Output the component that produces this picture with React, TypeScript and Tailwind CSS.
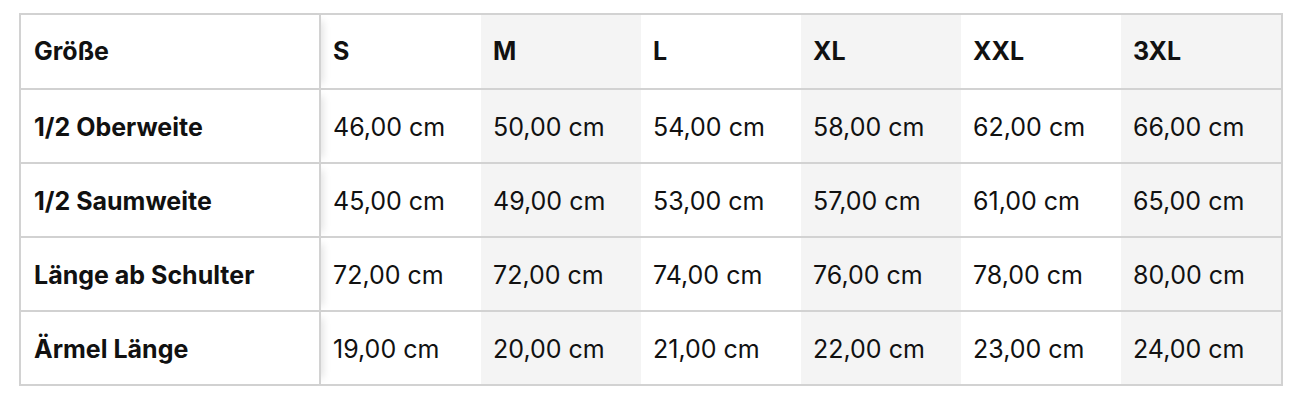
import React from 'react'

const sizes = ['S', 'M', 'L', 'XL', 'XXL', '3XL']

const rows: { label: string; values: string[] }[] = [
  { label: '1/2 Oberweite', values: ['46,00 cm', '50,00 cm', '54,00 cm', '58,00 cm', '62,00 cm', '66,00 cm'] },
  { label: '1/2 Saumweite', values: ['45,00 cm', '49,00 cm', '53,00 cm', '57,00 cm', '61,00 cm', '65,00 cm'] },
  { label: 'Länge ab Schulter', values: ['72,00 cm', '72,00 cm', '74,00 cm', '76,00 cm', '78,00 cm', '80,00 cm'] },
  { label: 'Ärmel Länge', values: ['19,00 cm', '20,00 cm', '21,00 cm', '22,00 cm', '23,00 cm', '24,00 cm'] },
]

function SizeTable() {
  return (
    <div className="ml-[19px] mt-[13px] w-[1264px] border-2 border-[#d2d2d2] bg-white">
      <table className="table-fixed border-separate border-spacing-0 w-[1260px] text-[#111]">
        <colgroup>
          <col className="w-[300px]" />
          {sizes.map((s) => (
            <col key={s} className="w-[160px]" />
          ))}
        </colgroup>
        <thead>
          <tr className="h-[75px]">
            <th className="relative z-10 border-r-2 border-b-2 border-[#d2d2d2] bg-white pl-[13px] pt-px text-left font-bold shadow-[8px_0_8px_-6px_rgba(0,0,0,0.12)]">
              Größe
            </th>
            {sizes.map((s, i) => (
              <th
                key={s}
                className={`border-b-2 border-[#d2d2d2] pl-3 pt-px text-left font-bold ${i % 2 === 1 ? 'bg-[#f4f4f4]' : 'bg-white'}`}
              >
                {s}
              </th>
            ))}
          </tr>
        </thead>
        <tbody>
          {rows.map((row, r) => {
            const last = r === rows.length - 1
            return (
              <tr key={row.label} className={last ? 'h-[72px]' : 'h-[74px]'}>
                <td
                  className={`relative z-10 border-r-2 border-[#d2d2d2] bg-white pl-[13px] pt-1 font-bold shadow-[8px_0_8px_-6px_rgba(0,0,0,0.12)] ${last ? '' : 'border-b-2'}`}
                >
                  {row.label}
                </td>
                {row.values.map((v, i) => (
                  <td
                    key={i}
                    className={`border-[#d2d2d2] pl-3 pt-1 ${last ? '' : 'border-b-2'} ${i % 2 === 1 ? 'bg-[#f4f4f4]' : 'bg-white'}`}
                  >
                    {v}
                  </td>
                ))}
              </tr>
            )
          })}
        </tbody>
      </table>
    </div>
  )
}

export default function App() {
  return (
    <div className="min-h-[404px] w-[1308px] bg-white pt-px font-['Inter',sans-serif] text-[25px]">
      <div className="-mt-px">
        <SizeTable />
      </div>
    </div>
  )
}
